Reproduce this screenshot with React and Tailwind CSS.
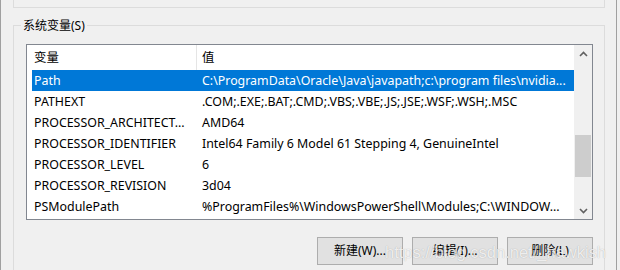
import React from "react";

const rows = [
  ["Path", "C:\\ProgramData\\Oracle\\Java\\javapath;c:\\program files\\nvidia...", true],
  ["PATHEXT", ".COM;.EXE;.BAT;.CMD;.VBS;.VBE;.JS;.JSE;.WSF;.WSH;.MSC"],
  ["PROCESSOR_ARCHITECT...", "AMD64"],
  ["PROCESSOR_IDENTIFIER", "Intel64 Family 6 Model 61 Stepping 4, GenuineIntel"],
  ["PROCESSOR_LEVEL", "6"],
  ["PROCESSOR_REVISION", "3d04"],
  ["PSModulePath", "%ProgramFiles%\\WindowsPowerShell\\Modules;C:\\WINDOW..."],
];

const font = { fontFamily: '"Noto Sans", "Noto Sans CJK SC", sans-serif' };

function Chevron({ up }) {
  return (
    <svg width="9" height="6" viewBox="0 0 9 6" className="block">
      <polyline
        points={up ? "1,5 4.5,1.5 8,5" : "1,1 4.5,4.5 8,1"}
        fill="none"
        stroke="#606060"
        strokeWidth="1.6"
      />
    </svg>
  );
}

function Button({ children }) {
  return (
    <div className="w-[86px] h-[28px] border border-[#adadad] bg-[#e1e1e1] flex items-center justify-center text-[12px] leading-[16px] text-black">
      {children}
    </div>
  );
}

export default function App() {
  return (
    <div
      className="relative w-[620px] h-[270px] bg-[#f0f0f0] overflow-hidden flex text-[12.4px] leading-[16px]"
      style={font}
    >
      <div className="w-[1px] bg-[#a0a0a0]" />
      <div className="flex-1 pl-[12px] pr-[11px] flex flex-col">
        <div className="h-[8px] border-l border-r border-b border-[#dcdcdc]" />
        <div className="relative mt-[17px] flex-1 border border-[#dcdcdc] border-b-0 flex flex-col">
          <div className="absolute -top-[8px] left-[7px] px-[2px] bg-[#f0f0f0] text-[12px] leading-[15px] text-black">
            系统变量(S)
          </div>
          <div className="mt-[18px] ml-[12px] mr-[11px] h-[176px] border border-[#828790] bg-white flex">
            <div className="flex-1 min-w-0 flex flex-col">
              <div className="h-[25px] flex items-stretch">
                <div className="w-[169px] pl-[7px] flex items-center">变量</div>
                <div className="w-[1px] bg-[#e5e5e5]" />
                <div className="flex-1 pl-[5px] flex items-center">值</div>
              </div>
              {rows.map(([k, v, sel]) => (
                <div
                  key={k}
                  className={
                    "ml-[5px] h-[21px] flex items-center whitespace-nowrap " +
                    (sel ? "bg-[#0078d7] text-white" : "text-black")
                  }
                >
                  <div className="w-[170px] shrink-0 pl-[2px]">{k}</div>
                  <div className="flex-1">{v}</div>
                </div>
              ))}
            </div>
            <div className="w-[18px] bg-[#f0f0f0] flex flex-col items-center">
              <div className="h-[17px] w-full flex items-center justify-center">
                <Chevron up />
              </div>
              <div className="mt-[73px] w-[16px] h-[42px] bg-[#cdcdcd]" />
              <div className="flex-1" />
              <div className="h-[17px] w-full flex items-center justify-center">
                <Chevron />
              </div>
            </div>
          </div>
          <div className="mt-[17px] mr-[11px] flex justify-end gap-[9px]">
            <Button>新建(W)...</Button>
            <Button>编辑(I)...</Button>
            <Button>删除(L)</Button>
          </div>
        </div>
      </div>
      <div className="w-[1px] bg-[#a0a0a0]" />
      <div className="w-[3px]" />
      <div
        className="absolute left-[385px] top-[243px] text-[16.5px] leading-[18px] text-white/80 whitespace-nowrap [text-shadow:0_0_1px_rgba(0,0,0,0.3)]"
        style={{ fontFamily: '"Liberation Sans", sans-serif' }}
      >
        https://blog.csdn.net/_hawkish
      </div>
    </div>
  );
}
